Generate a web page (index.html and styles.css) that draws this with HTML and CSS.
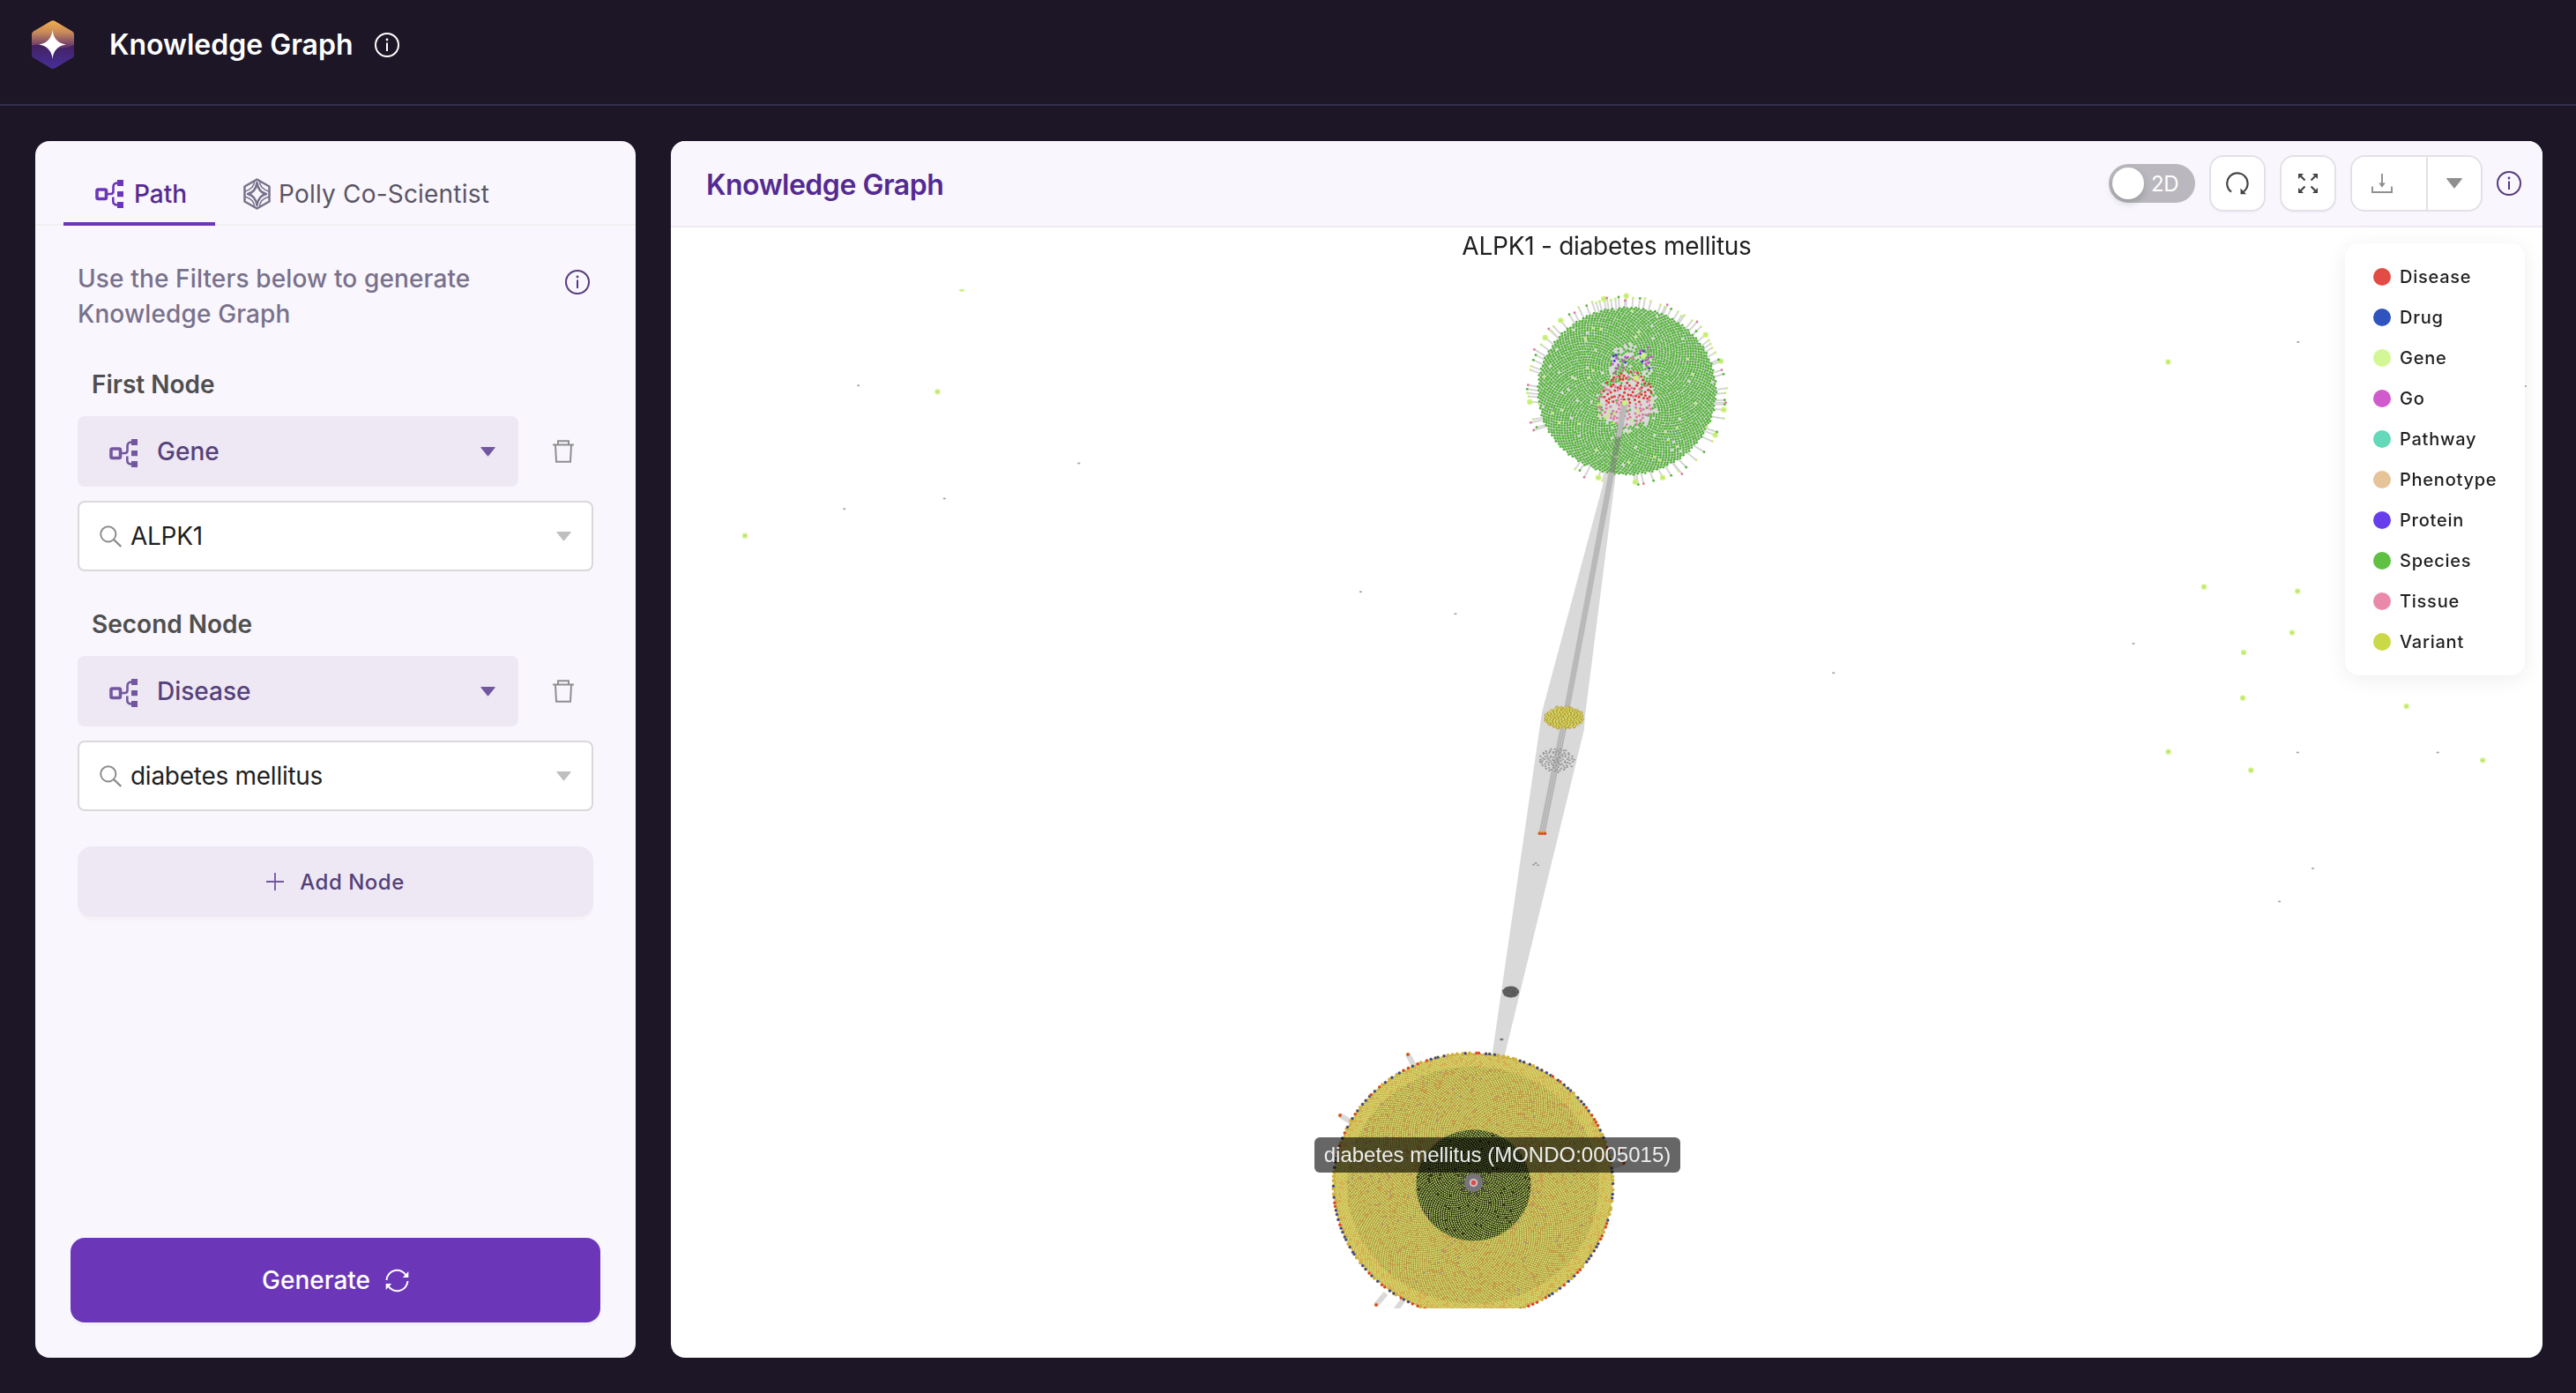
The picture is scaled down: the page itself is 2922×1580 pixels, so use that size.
FILE: index.html
```html
<!DOCTYPE html>
<html lang="en">
<head>
<meta charset="utf-8">
<title>Knowledge Graph</title>
<link rel="stylesheet" href="styles.css">
</head>
<body>
<svg class="sprite" aria-hidden="true">
  <symbol id="i-path" viewBox="0 0 32 32">
    <rect x="2" y="11" width="10.5" height="10.5" rx="1.5" fill="none" stroke="currentColor" stroke-width="3.6"/>
    <path d="M14 16h3.5q3 0 3-3V8q0-4.5 5-4.5M20.300 19.500V24q0 4.500 5 4.500" fill="none" stroke="currentColor" stroke-width="2.600"/>
    <path d="M25 0h7v7h-7zM25 13h7v6.200h-7zM25 25h7v7h-7z" fill="currentColor"/>
  </symbol>
  <symbol id="i-info" viewBox="0 0 28 28">
    <circle cx="14" cy="14" r="13" fill="none" stroke="currentColor" stroke-width="2"/>
    <path d="M14 11.500V21" stroke="currentColor" stroke-width="2"/>
    <circle cx="14" cy="8" r="1.400" fill="currentColor"/>
  </symbol>
  <symbol id="i-trash" viewBox="0 0 24 26">
    <path d="M0 5.500h24M3 6l1 18.800h16l1-18.800M6 5V1.200h12V5" fill="none" stroke="currentColor" stroke-width="2"/>
  </symbol>
  <symbol id="i-search" viewBox="0 0 25 25">
    <circle cx="9.800" cy="9.800" r="8.600" fill="none" stroke="currentColor" stroke-width="2"/>
    <path d="M16 16l8.300 8" stroke="currentColor" stroke-width="2.400"/>
  </symbol>
  <symbol id="i-caret" viewBox="0 0 17 11"><path d="M.8 0h15.400q.8.300.3 1L9 10.300q-.5.500-1 0L.5 1q-.5-.7.3-1z" fill="currentColor"/></symbol>
</svg>

<header class="topbar">
  <svg class="logo" viewBox="0 0 48 55">
    <defs>
      <linearGradient id="sky" x1="0" y1="0" x2="0" y2="1"><stop offset="0" stop-color="#f6b04d"/><stop offset=".25" stop-color="#c88a5a"/><stop offset=".55" stop-color="#64346c"/></linearGradient>
      <linearGradient id="sea" x1="0" y1="0" x2="0" y2="1"><stop offset="0" stop-color="#43225f"/><stop offset="1" stop-color="#472d9c"/></linearGradient>
      <clipPath id="hex"><path d="M22 .8q2-1.200 4 0L46 12.500q2 1.200 2 3.500v23q0 2.300-2 3.500L26 54.200q-2 1.200-4 0L2 42.500Q0 41.300 0 39V16q0-2.300 2-3.500z"/></clipPath>
    </defs>
    <g clip-path="url(#hex)">
      <path d="M0 0h48v55H0z" fill="url(#sky)"/>
      <path d="M0 28.500q12-2.500 24 1.500t24-2v27H0z" fill="url(#sea)"/>
    </g>
    <path d="M23.500 11q1.500 14.500 15.500 16.500Q25 29.500 23.500 44 22 29.500 8 27.500 22 25.500 23.500 11z" fill="#fff"/>
    <path d="M23.500 18l4.500 5.500 4.500 4-4.500 4-4.500 5.500-4.500-5.500-4.500-4 4.500-4z" fill="#fff"/>
  </svg>
  <h1 class="topbar-title">Knowledge Graph</h1>
  <svg class="info"><use href="#i-info"/></svg>
</header>

<main class="workspace">
  <aside class="panel">
    <nav class="tabs">
      <a class="tab tab-active"><svg class="path-icon"><use href="#i-path"/></svg>Path</a>
      <a class="tab"><svg class="polly-icon" viewBox="0 0 31 36" fill="none" stroke="currentColor" stroke-width="2.500" stroke-linejoin="round"><path d="M15.500 1.500L29.500 9.500v17l-14 8-14-8v-17z"/><path d="M15.500 5q1.500 11 10.500 13-9 2-10.500 13-1.500-11-10.500-13 9-2 10.500-13z"/><path d="M12.500 4Q12 12 2 15M18.500 4q.5 8 10.500 11M12.500 32Q12 24 2 21M18.500 32q.5-8 10.500-11" stroke-width="1.500"/></svg>Polly Co-Scientist</a>
    </nav>
    <div class="panel-body">
      <div class="intro"><p>Use the Filters below to generate Knowledge Graph</p><svg class="info"><use href="#i-info"/></svg></div>
      <section class="node">
        <h2 class="node-label">First Node</h2>
        <div class="node-row">
          <div class="select"><svg class="path-icon"><use href="#i-path"/></svg><span>Gene</span><svg class="caret"><use href="#i-caret"/></svg></div>
          <svg class="trash"><use href="#i-trash"/></svg>
        </div>
        <div class="search"><svg class="search-icon"><use href="#i-search"/></svg><span>ALPK1</span><svg class="caret"><use href="#i-caret"/></svg></div>
      </section>
      <section class="node">
        <h2 class="node-label">Second Node</h2>
        <div class="node-row">
          <div class="select"><svg class="path-icon"><use href="#i-path"/></svg><span>Disease</span><svg class="caret"><use href="#i-caret"/></svg></div>
          <svg class="trash"><use href="#i-trash"/></svg>
        </div>
        <div class="search"><svg class="search-icon"><use href="#i-search"/></svg><span>diabetes mellitus</span><svg class="caret"><use href="#i-caret"/></svg></div>
      </section>
      <button class="add"><svg class="plus" viewBox="0 0 20 20"><path d="M10 0v20M0 10h20" stroke="currentColor" stroke-width="1.800"/></svg>Add Node</button>
    </div>
    <button class="generate">Generate
      <svg class="sync" viewBox="0 0 27 27" fill="none" stroke="currentColor" stroke-width="2"><path d="M1.500 13A12 12 0 0 1 24 8M25.500 14A12 12 0 0 1 3 19"/><path d="M26.300 3v7h-6.500zM.7 24v-7h6.500z" fill="currentColor" stroke="none"/></svg>
    </button>
  </aside>

  <section class="viewer">
    <div class="viewer-head">
      <h2 class="viewer-title">Knowledge Graph</h2>
      <div class="toggle"><i class="knob"></i>2D</div>
      <div class="tool"><svg class="reload" viewBox="0 0 26 26"><path d="M6 22.500A11.700 11.700 0 1 1 20 22.300" fill="none" stroke="currentColor" stroke-width="2.200"/><path d="M16.500 18.500v6.700h6.500z" fill="currentColor"/></svg></div>
      <div class="tool"><svg class="expand" viewBox="0 0 22 22"><path d="M2 2l5.500 5.500M20 2l-5.500 5.500M2 20l5.500-5.500M20 20l-5.500-5.500" stroke="currentColor" stroke-width="2.200"/><path d="M0 0h6L0 6zM22 0h-6l6 6zM0 22h6l-6-6zM22 22h-6l6-6z" fill="currentColor"/></svg></div>
      <div class="split">
        <div class="split-main"><svg class="download" viewBox="0 0 24 22"><path d="M1 14.500V21h22v-6.500M12 0v12" fill="none" stroke="currentColor" stroke-width="1.900"/><path d="M8.200 10.500h7.600L12 15.800z" fill="currentColor"/></svg></div>
        <div class="split-drop"><svg class="caret"><use href="#i-caret"/></svg></div>
      </div>
      <svg class="info"><use href="#i-info"/></svg>
    </div>
    <div class="stage">
      <canvas id="graph" class="graph" width="2123" height="1226"></canvas>
      <div class="caption">ALPK1 - diabetes mellitus</div>
      <div class="tooltip">diabetes mellitus (MONDO:0005015)</div>
      <ul class="legend">
        <li><i class="dot disease"></i>Disease</li>
        <li><i class="dot drug"></i>Drug</li>
        <li><i class="dot gene"></i>Gene</li>
        <li><i class="dot go"></i>Go</li>
        <li><i class="dot pathway"></i>Pathway</li>
        <li><i class="dot phenotype"></i>Phenotype</li>
        <li><i class="dot protein"></i>Protein</li>
        <li><i class="dot species"></i>Species</li>
        <li><i class="dot tissue"></i>Tissue</li>
        <li><i class="dot variant"></i>Variant</li>
      </ul>
    </div>
  </section>
</main>
<script src="graph.js"></script>
</body>
</html>
```

FILE: styles.css
```css
* { box-sizing: border-box; }
body { margin: 0; height: 1580px; display: flex; flex-direction: column; background: #1c1626; font-family: Inter, "Liberation Sans", sans-serif; font-size: 28px; color: #1f1f1f; overflow: hidden; }
h1, h2, p, ul { margin: 0; padding: 0; font-size: inherit; font-weight: inherit; }
svg { display: block; flex: none; }
button { border: 0; font: inherit; }
.sprite { position: absolute; width: 0; height: 0; }

.topbar { height: 120px; flex: none; display: flex; align-items: flex-start; padding: 23px 36px 0; border-bottom: 2px solid #352f4f; color: #fff; }
.logo { width: 48px; height: 55px; }
.topbar-title { margin-left: 40px; width: 277px; font-size: 32px; font-weight: 600; line-height: 40px; margin-top: 8px; white-space: nowrap; }
.info { width: 28px; height: 28px; }
.topbar .info { margin: 14px 0 0 24px; }

.workspace { flex: 1; display: flex; gap: 40px; padding: 40px 38px 40px 40px; min-height: 0; }
.panel { width: 681px; display: flex; flex-direction: column; background: #f9f6fe; border-radius: 16px; overflow: hidden; }
.tabs { height: 96px; flex: none; display: flex; padding-left: 32px; border-bottom: 2px solid #f0f0f0; }
.tab { height: 96px; display: flex; align-items: center; padding-top: 24px; color: #5a5563; white-space: nowrap; padding-left: 32px; letter-spacing: .2px; }
.tab-active { width: 172px; padding-left: 36px; color: #532a91; border-bottom: 4px solid #6b37b8; padding-top: 28px; font-weight: 500; letter-spacing: 0; }
.path-icon { width: 32px; height: 32px; color: #6b37b8; }
.tab .path-icon { margin-right: 12px; }
.polly-icon { width: 31px; height: 36px; margin-right: 9px; color: #78718a; }
.panel-body { padding: 40px 48px 0; flex: 1; }
.intro { display: flex; justify-content: space-between; align-items: flex-start; color: #78718a; font-weight: 500; line-height: 40px; letter-spacing: .13px; padding-right: 4px; }
.intro p { width: 480px; }
.intro .info { margin-top: 10px; color: #553c7d; }
.node { height: 272px; }
.node-label { padding: 40px 16px 16px; height: 96px; line-height: 40px; font-weight: 600; color: #4f4f4f; }
.node-row { display: flex; align-items: center; }
.select { width: 500px; height: 80px; display: flex; align-items: center; padding: 4px 26px 0 36px; background: #eee8f5; border-radius: 8px; color: #55417a; }
.select span { flex: 1; margin-left: 22px; margin-top: -4px; font-weight: 500; }
.select .path-icon, .select .caret { color: #72579f; }
.caret { width: 17px; height: 11px; margin-top: -4px; }
.trash { width: 24px; height: 26px; margin-left: 39px; color: #8f8f8f; }
.search { width: 585px; height: 80px; margin-top: 16px; display: flex; align-items: center; padding: 0 23px; background: #fff; border: 2px solid #d9d9d9; border-radius: 8px; letter-spacing: -.27px; }
.search span { flex: 1; margin-left: 10px; }
.search-icon { width: 25px; height: 25px; color: #8c8c8c; }
.search .caret { color: #bfbfbf; margin-top: 0; }
.add { width: 585px; height: 80px; margin-top: 40px; display: flex; align-items: center; justify-content: center; gap: 18px; background: #eee8f5; border-radius: 16px; box-shadow: 0 4px 0 rgba(0,0,0,.02); font-size: 24px; font-weight: 500; letter-spacing: .5px; color: #55417a; }
.plus { width: 20px; height: 20px; color: #72579f; }
.generate { width: 601px; height: 96px; flex: none; margin: 0 40px 40px; display: flex; align-items: center; justify-content: center; gap: 17px; background: #6b37b8; border-radius: 16px; box-shadow: 0 4px 0 rgba(0,0,0,.02); color: #fff; font-weight: 500; }
.sync { width: 27px; height: 27px; }

.viewer { flex: 1; min-width: 0; display: flex; flex-direction: column; background: #fff; border-radius: 16px; overflow: hidden; }
.viewer-head { height: 98px; flex: none; display: flex; align-items: center; padding: 0 24px 0 40px; background: #f9f6fe; border-bottom: 2px solid #eee8f7; }
.viewer-title { flex: 1; padding-top: 2px; font-size: 32px; font-weight: 600; letter-spacing: -.48px; color: #532a91; }
.toggle { width: 98px; height: 44px; display: flex; align-items: center; padding-left: 4px; border-radius: 22px; background: #bab8be; color: #fff; font-size: 24px; letter-spacing: -.3px; }
.knob { width: 36px; height: 36px; margin-right: 8px; border-radius: 50%; background: #fff; box-shadow: 0 4px 8px rgba(0,35,11,.2); }
.tool { width: 64px; height: 64px; margin-left: 16px; display: flex; align-items: center; justify-content: center; background: #fff; border: 2px solid #e3e0e8; border-radius: 16px; box-shadow: 0 2px 0 rgba(0,0,0,.02); color: #454545; }
.reload { width: 26px; height: 26px; }
.expand { width: 22px; height: 22px; }
.split { width: 150px; height: 64px; margin: 0 16px; display: flex; background: #fff; border: 2px solid #e3e0e8; border-radius: 16px; color: #8f8f8f; }
.split-main { width: 86px; display: flex; align-items: center; padding-left: 22px; border-right: 2px solid #e3e0e8; }
.download { width: 24px; height: 22px; }
.split-drop { flex: 1; display: flex; align-items: center; justify-content: center; }
.split .caret { width: 20px; height: 12px; margin: 0; }
.viewer-head .info { color: #553c7d; }

.stage { position: relative; flex: 1; }
.graph { display: block; width: 2123px; height: 1226px; }
.caption { position: absolute; top: 1px; left: 0; right: 0; text-align: center; line-height: 40px; letter-spacing: -.25px; }
.tooltip { position: absolute; left: 730px; top: 1032px; width: 415px; height: 40px; border-radius: 6px; background: rgba(0,0,0,.6); color: #eee; font: 24px/40px "Liberation Sans", Arial, sans-serif; text-align: center; white-space: nowrap; }
.legend { position: absolute; right: 20px; top: 18px; width: 204px; height: 490px; padding: 15px 0 0 32px; background: #fff; border-radius: 16px; box-shadow: 0 4px 24px rgba(0,0,0,.07); list-style: none; font-size: 20px; font-weight: 500; letter-spacing: .75px; }
.legend li { height: 46px; display: flex; align-items: center; }
.dot { width: 20px; height: 20px; margin-right: 10px; border-radius: 50%; }
.disease { background: #e24c45; }
.drug { background: #2f53bf; }
.gene { background: #d3f794; }
.go { background: #d05bcd; }
.pathway { background: #65d8b9; }
.phenotype { background: #e6c398; }
.protein { background: #673eec; }
.species { background: #5fc042; }
.tissue { background: #e98aab; }
.variant { background: #ccd946; }
```

FILE: graph.js
```js
const ctx = document.getElementById('graph').getContext('2d');
ctx.translate(-761, -258);

const COLOR = { r: '#dd3b35', g: '#55b53a', p: '#e0799b', l: '#c9ec7e', G: '#cdf27f', b: '#2946a8', m: '#c44fc6', v: '#5b35e0' };
let seed = 11;
const rnd = () => (seed = (seed * 16807) % 2147483647) / 2147483647;

function dot(x, y, rx, fill, ry = rx) {
  ctx.fillStyle = fill;
  ctx.beginPath();
  ctx.ellipse(x, y, rx, ry, 0, 0, 7);
  ctx.fill();
}
function line(x1, y1, x2, y2, w, stroke) {
  ctx.strokeStyle = stroke;
  ctx.lineWidth = w;
  ctx.beginPath();
  ctx.moveTo(x1, y1);
  ctx.lineTo(x2, y2);
  ctx.stroke();
}
function poly(points, fill) {
  ctx.fillStyle = fill;
  ctx.beginPath();
  points.forEach(p => ctx.lineTo(p[0], p[1]));
  ctx.fill();
}
// Sunflower packing of n dots in an ellipse
function disc(cx, cy, rx, ry, n, jitter, each) {
  for (let i = 0; i < n; i++) {
    const t = Math.sqrt((i + .5) / n), a = i * 2.399963;
    each(cx + rx * t * Math.cos(a) + (rnd() - .5) * jitter, cy + ry * t * Math.sin(a) + (rnd() - .5) * jitter, t);
  }
}

const HUB = [1843, 457], ROOT = [1671.5, 1341.5];

// Bundle of edges between the two hubs
poly([HUB, [1797.800, 813], [1796.800, 828], ROOT, [1749, 808]], '#d9d9d9');

// Rim nodes of the gene cluster, in thirds of a pixel from (1640, 240)
const rim = {
  G: [538,297,614,287,391,370,338,429,286,648,519,905,645,920,738,905,917,760,946,674,936,509,884,419],
  p: [548,294,610,303,754,317,438,344,350,399,301,469,280,590,289,718,299,744,471,904,673,926,804,893,953,650,939,539,855,375],
  g: [588,291,661,295,479,320,767,331,420,350,306,488,298,505,277,604,309,734,456,881,655,929,707,916,767,898,818,870,879,818,923,750,949,641,949,656,945,553,928,504,852,407],
  l: [562,301,637,294,678,296,698,305,731,317,745,325,790,341,802,355,812,353,838,371,868,392,895,438,901,450,906,464,917,480,956,601,951,617,946,704,907,782,852,845,793,884,534,916,440,876,297,707,282,629,277,617,288,539,291,526,324,453,367,391,360,407,452,326,498,308,512,310,523,305,577,297]
};
const rimNodes = [];
for (const k in rim) for (let i = 0; i < rim[k].length; i += 2) rimNodes.push([1640 + rim[k][i] / 3, 240 + rim[k][i + 1] / 3, k]);
rimNodes.forEach(n => line(n[0], n[1], HUB[0], HUB[1], 2, '#d6d6d6'));
dot(1845.5, 443.5, 100.5, '#d9d9d9', 94.5);

disc(1845.5, 443.5, 101.5, 95.3, 3350, .55, (x, y) => {
  const core = Math.hypot((x - 1845) / 29, (y - 457) / 26);
  const cone = Math.hypot((x - 1849) / 25, (y - 415) / 26);
  if ((core < 1 && rnd() < .93) || (core < 1.25 && rnd() < .35) || (cone < 1 && rnd() < .35) || rnd() < .012) return;
  dot(x, y, 1.400, rnd() < .012 ? COLOR.l : COLOR.g);
});

line(HUB[0], HUB[1], 1828, 538, 6.500, 'rgba(110,110,110,.45)');
line(1828, 536, 1777, 806, 6.500, '#b9b9b9');
line(1777, 806, 1749.3, 944, 7.500, '#c4c4c4');
[-2.500, 0, 2.500].forEach(d => line(1776 + d, 815, 1749.3 + d, 944, 1.300, '#b2b2b2'));

// Randomly placed dots that keep a minimum distance from each other
const placed = [];
function scatter(n, x, y, rx, ry, keys, minY = -1e4, maxY = 1e4) {
  for (let i = 0, tries = 0; i < n && tries < 4000; tries++) {
    const a = rnd() * 6.283, t = Math.sqrt(rnd());
    const px = x + rx * t * Math.cos(a), py = y + ry * t * Math.sin(a);
    if (py < minY || py > maxY || placed.some(q => Math.hypot(q[0] - px, q[1] - py) < 2.800)) continue;
    placed.push([px, py]);
    dot(px, py, 1.500, COLOR[keys[Math.floor(rnd() * keys.length)]]);
    i++;
  }
}
scatter(75, 1846, 443, 28, 22, 'rrrrrp', -1e4, 457);
scatter(80, 1844, 456, 32, 27, 'pppppl', 438, 484);
scatter(20, 1841, 412, 12, 20, 'mgvpm');
scatter(16, 1868, 405, 8, 14, 'mgvm');
line(1842.700, 459, 1836, 495, 6, '#b9b9b9');
dot(1843, 457, 3, COLOR.G);
dot(1864, 404, 3, COLOR.G);
dot(1856, 429, 3, COLOR.G);
rimNodes.forEach(n => dot(n[0], n[1], n[2] === 'G' ? 3.200 : 1.400, COLOR[n[2]]));
rimNodes.filter(n => n[2] === 'G').forEach(n => dot(n[0], n[1], .9, '#a5c862', .6));

// Variant and label clusters along the bundle
disc(1774.3, 814, 21.8, 12.300, 120, .8, (x, y) => dot(x, y, 1.900, '#bd9637'));
disc(1774.3, 814, 21.8, 12.300, 120, .5, (x, y) => dot(x, y, 1.100, '#cde268'));
disc(1765.3, 862, 20, 13.500, 90, 1.500, (x, y) => dot(x, y, 1.300, '#979797', 1));
[1746.5, 1749.3, 1752.3].forEach(x => { dot(x, 945, 2.200, '#d5a03c'); dot(x, 945.5, 1.600, COLOR.r); });
[[1742, 979], [1739.500, 980.700], [1744.500, 981.300]].forEach(p => dot(p[0], p[1], 1.600, '#9b9b9b', .9));
dot(1713.7, 1125, 9.500, '#6b6b6b', 6.500);
disc(1713.7, 1125, 9, 6, 60, 1, (x, y) => dot(x, y, .7, '#4f4f4f'));
dot(1703.3, 1179, 2.200, '#777', 1.200);

// Disease cluster
[[1597, 1196, 1605, 1211], [1520, 1265, 1535, 1274], [1561, 1480, 1572, 1467], [1580, 1490, 1592, 1474], [1838, 1305, 1820, 1312], [1842, 1319, 1820, 1325]].forEach(s => {
  line(s[0], s[1], s[2], s[3], 6, '#d9d9d9');
  dot(s[0], s[1], 2.200, '#d5a03c');
  dot(s[0], s[1], 1.500, COLOR.r);
});
const CX = 1671, CY = 1344;
dot(CX, CY, 158.5, '#cfa84b', 149.5);
dot(CX, CY, 143, '#b38e3c', 134.5);
dot(CX + .5, CY + .5, 65, '#282310', 63);
disc(CX, CY, 157.5, 148.5, 12500, .3, (x, y, t) => {
  const inner = Math.hypot((x - CX) / 65, (y - CY) / 63) < 1;
  const r = rnd();
  const fill = inner ? (r < .97 ? '#b6dc6c' : '#4a431f') : t > .91 ? (r < .82 ? '#d2e272' : '#dfb75a') : r < .86 ? '#d0e374' : r < .985 ? '#dcae58' : '#b99aa0';
  dot(x, y, inner ? .9 : 1, fill);
});
for (let i = 0; i < 190; i++) {
  const a = (i + (rnd() - .5) * .6) / 190 * 6.28319, x = CX + 158.5 * Math.cos(a), y = CY + 149.5 * Math.sin(a), k = rnd();
  dot(x, y, 2, '#d2a53c');
  dot(x, y, 1.500, k < .52 ? COLOR.b : k < .74 ? COLOR.r : '#c9b83c');
}
for (let i = 0; i < 10; i++) {
  const a = i * .628;
  line(CX, CY - 2.500, CX + 17 * Math.cos(a), CY - 2.500 + 16 * Math.sin(a), 2.200, '#4b4640');
}
dot(1671.5, 1341.5, 10.500, '#77757a');
dot(1671.5, 1341.5, 4.600, '#d5cdd2');
dot(1671.5, 1341.5, 2.900, '#e24c45');

// Free nodes
[[845, 607.7], [1063.4, 444.3], [2459.3, 410.5], [2500, 665.7], [2606.2, 670.6], [2600, 717.5], [2545, 740], [2544, 791.7], [2729.6, 801], [2459.6, 852.7], [2553.3, 873.7], [2816.2, 862.3]].forEach(p => {
  dot(p[0], p[1], 3.100, '#cdf27f');
  dot(p[0], p[1], 1.100, '#a2c765', .6);
});
ctx.fillStyle = '#cdf27f';
ctx.beginPath();
ctx.arc(1091, 328, 3, 0, Math.PI);
ctx.fill();
[[973.7, 437.3], [957.7, 577.2], [1071.3, 565.6], [1223.8, 525.5], [1543.5, 671.3], [1651, 696.3], [2079.8, 763.3], [2606.8, 388], [2420, 730], [2606.3, 853.5], [2765.2, 853.5], [2623.5, 985], [2585.6, 1022.6], [2864.5, 438]].forEach(p => {
  dot(p[0], p[1], 1.700, '#a6a6a6', 1);
});
```
